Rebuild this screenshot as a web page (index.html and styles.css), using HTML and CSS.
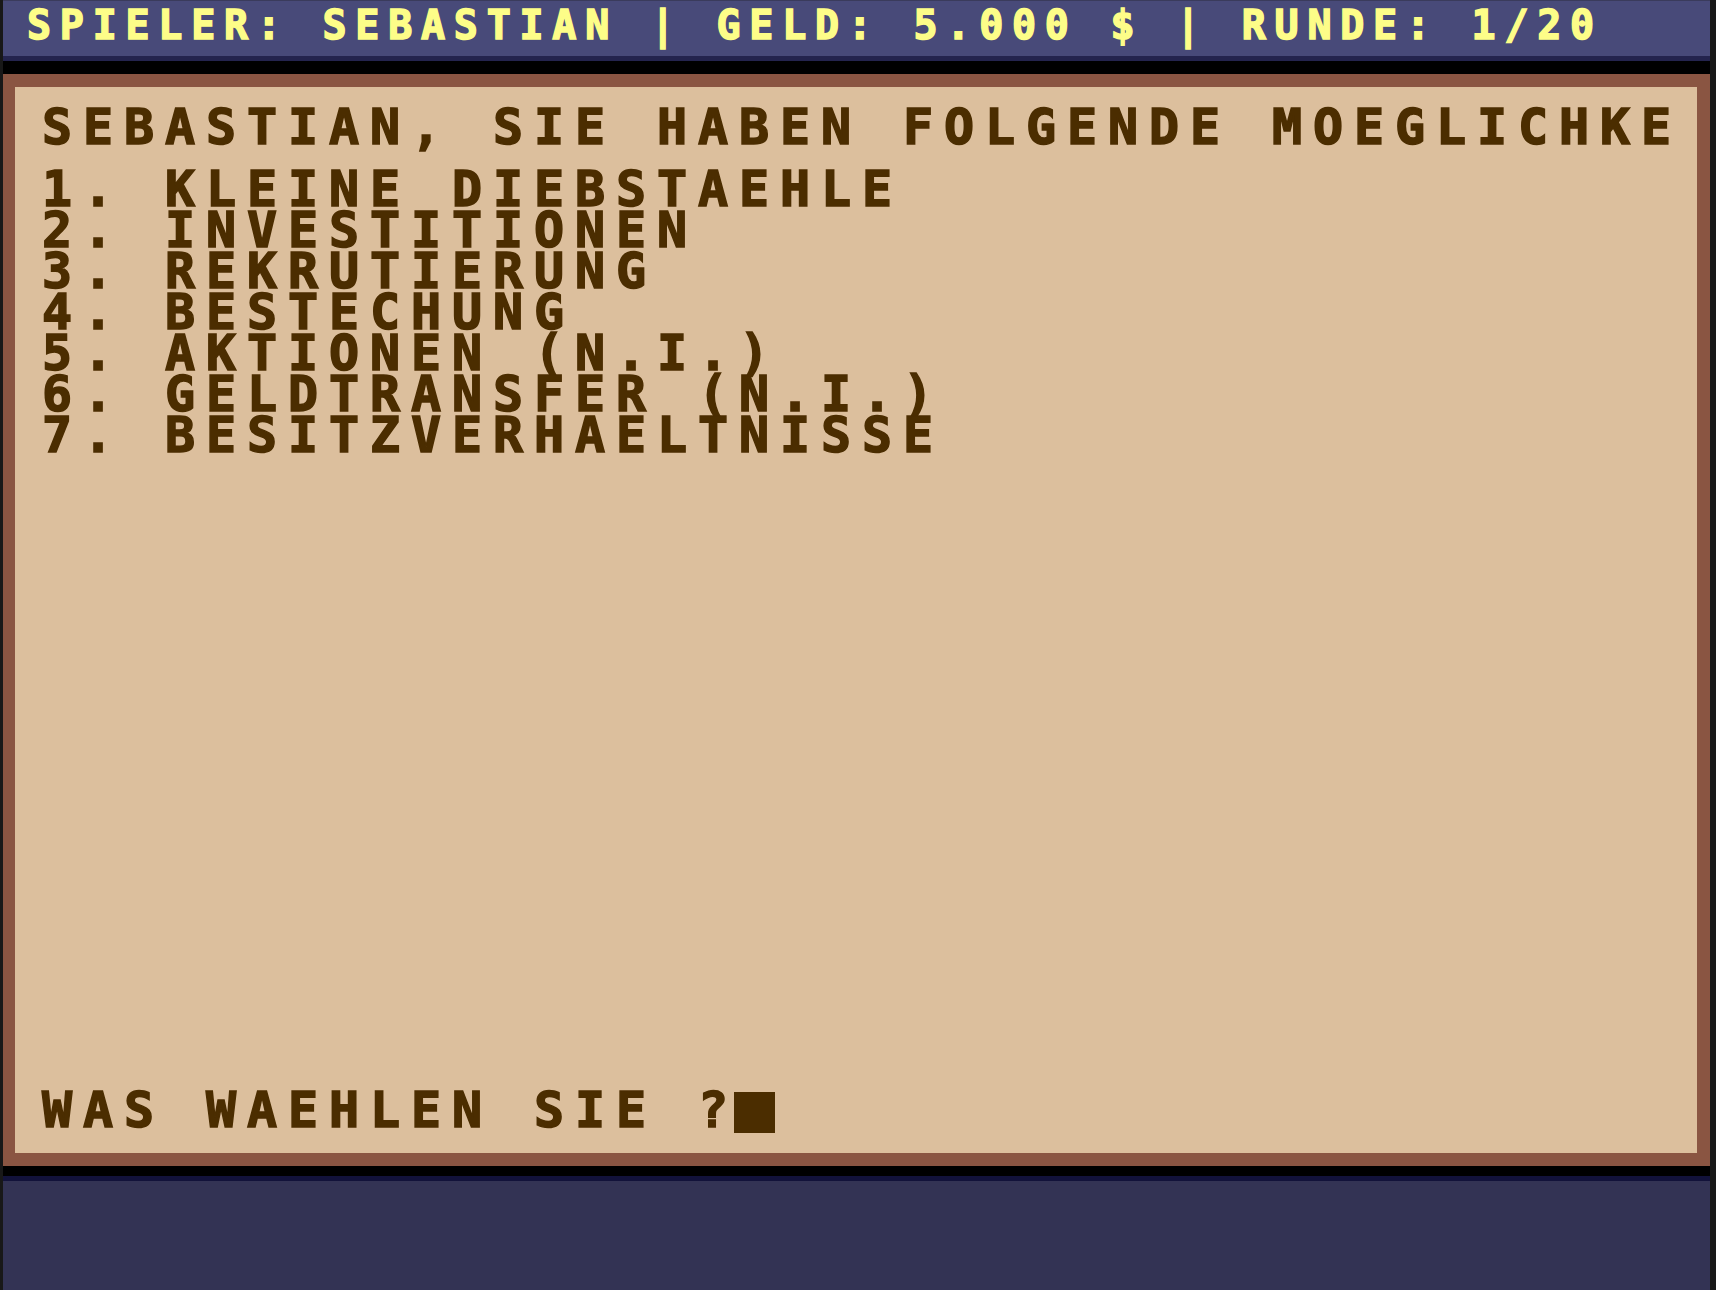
FILE: index.html
```html
<!DOCTYPE html>
<html lang="de">
<head>
<meta charset="utf-8">
<title>Spieler: Sebastian</title>
<link rel="stylesheet" href="styles.css">
</head>
<body>
<div class="frame">
  <header class="topbar">
    <div class="status">SPIELER: SEBASTIAN | GELD: 5.000 $ | RUNDE: 1/20</div>
  </header>
  <main class="screen">
    <div class="heading">SEBASTIAN, SIE HABEN FOLGENDE MOEGLICHKE</div>
    <ol class="menu">
      <li class="menu-item">1. KLEINE DIEBSTAEHLE</li>
      <li class="menu-item">2. INVESTITIONEN</li>
      <li class="menu-item">3. REKRUTIERUNG</li>
      <li class="menu-item">4. BESTECHUNG</li>
      <li class="menu-item">5. AKTIONEN (N.I.)</li>
      <li class="menu-item">6. GELDTRANSFER (N.I.)</li>
      <li class="menu-item">7. BESITZVERHAELTNISSE</li>
    </ol>
    <div class="prompt">WAS WAEHLEN SIE ?<span class="cursor"></span></div>
  </main>
  <footer class="footer"></footer>
</div>
</body>
</html>
```
FILE: styles.css
```css
html, body {
  margin: 0;
  padding: 0;
}
body {
  background: #181818;
  height: 1290px;
  overflow: hidden;
}
.frame {
  margin-left: 3px;
  width: 1707px;
  height: 1290px;
  background: #000;
  display: flex;
  flex-direction: column;
}
.topbar {
  box-sizing: border-box;
  height: 61px;
  flex: none;
  background: #484a79;
  border-top: 1px solid #3a3b5c;
  border-bottom: 5px solid #24244e;
  padding: 4px 0 0 24px;
}
.status {
  font-family: "DejaVu Sans Mono", "Liberation Mono", monospace;
  font-weight: bold;
  font-size: 40px;
  line-height: 40px;
  letter-spacing: 8.75px;
  color: #fdfd88;
  white-space: pre;
  -webkit-text-stroke: 1.5px #fdfd88;
}
.screen {
  box-sizing: border-box;
  margin-top: 13px;
  height: 1092px;
  flex: none;
  background: #dcbf9d;
  border: 13px solid #8a5542;
  border-left-width: 12px;
  padding: 20px 0 20px 27px;
  display: flex;
  flex-direction: column;
  overflow: hidden;
  font-family: "DejaVu Sans Mono", "Liberation Mono", monospace;
  font-weight: bold;
  font-size: 50px;
  line-height: 41px;
  letter-spacing: 10.9px;
  color: #4b2d00;
  -webkit-text-stroke: 1.5px #4b2d00;
}
.heading {
  white-space: pre;
}
.menu {
  list-style: none;
  margin: 21px 0 0 0;
  padding: 0;
}
.menu-item {
  white-space: pre;
}
.prompt {
  margin-top: auto;
  white-space: pre;
}
.cursor {
  display: inline-block;
  width: 41px;
  height: 41px;
  margin-left: -5px;
  background: #4b2d00;
  vertical-align: -6px;
}
.footer {
  margin-top: 10px;
  flex: 1;
  background: #333354;
  border-top: 5px solid #12123a;
}
```
